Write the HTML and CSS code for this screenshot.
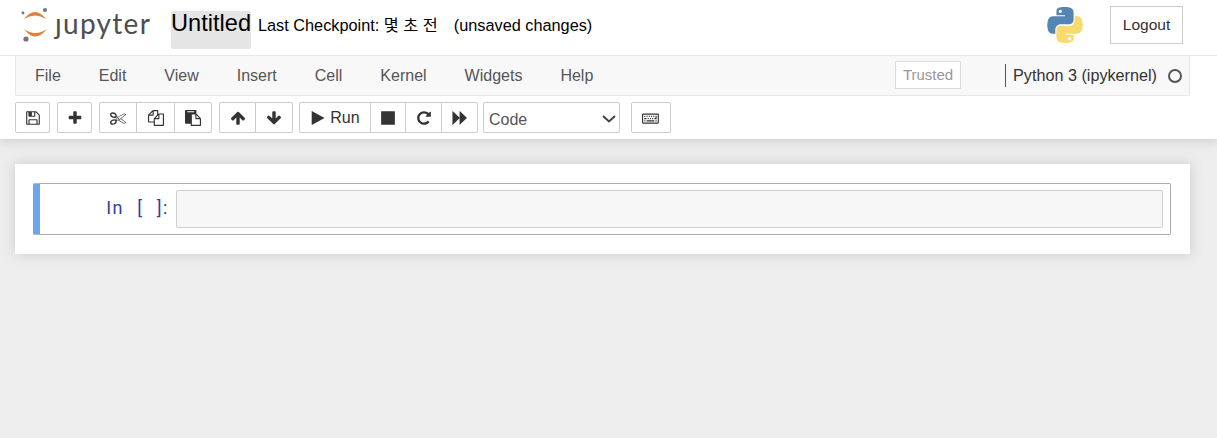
FILE: index.html
```html
<!DOCTYPE html>
<html lang="ko">
<head>
<meta charset="utf-8">
<title>Untitled - Jupyter Notebook</title>
<link rel="stylesheet" href="styles.css">
</head>
<body>
<div class="top">
  <header class="header">
    <div class="logo">
      <svg class="logo-mark" viewBox="0 0 36 40" width="36" height="40"><path class="arc" d="M3 14Q14 0 25 14Q14 7 3 14Z"/><path class="arc" d="M3 24Q14 39 26 24Q14 32 3 24Z"/><circle class="dot" cx="24" cy="5" r="2.1"/><circle class="dot" cx="2" cy="8" r="1.4"/><circle class="dot" cx="5" cy="34" r="2.6"/></svg>
      <span class="wordmark">ȷupyter</span>
    </div>
    <span class="title">Untitled</span>
    <span class="checkpoint">Last Checkpoint: 몇 초 전</span>
    <span class="autosave">(unsaved changes)</span>
    <svg class="pylogo" viewBox="0 0 110 110" width="36" height="36"><path class="py-blue" d="M54.9 0c-4.6 0-9 .4-12.8 1.1C30.8 3 28.8 7.2 28.8 14.9v10.2h26.2v3.400H19c-7.600 0-14.300 4.600-16.400 13.300-2.400 10-2.500 16.200 0 26.600 1.900 7.500 6.300 13 13.900 13h9V69c0-8.700 7.500-16.300 16.400-16.300h26.200c7.300 0 13.100-6 13.100-13.300V14.900c0-7.100-6-12.400-13.100-13.600C63.500.4 59.400 0 54.900 0zM40.700 8.100c2.700 0 4.900 2.200 4.900 5 0 2.700-2.200 4.900-4.900 4.900-2.700 0-4.900-2.200-4.900-4.900 0-2.800 2.200-5 4.900-5z"/><path class="py-yellow" d="M55.100 110c4.600 0 9-.4 12.800-1.100 11.300-1.900 13.300-6.100 13.300-13.800V84.900H55v-3.400h36c7.600 0 14.300-4.600 16.400-13.300 2.400-10 2.500-16.200 0-26.600-1.900-7.500-6.300-13-13.900-13h-9V41c0 8.700-7.500 16.300-16.400 16.300H41.900c-7.300 0-13.100 6-13.100 13.300v24.500c0 7.100 6 12.400 13.100 13.600 4.600.9 8.700 1.300 13.200 1.300zM69.300 101.900c-2.700 0-4.900-2.200-4.900-5 0-2.700 2.200-4.900 4.900-4.900 2.700 0 4.900 2.200 4.900 4.900 0 2.800-2.200 5-4.900 5z"/></svg>
    <button class="logout">Logout</button>
  </header>
  <nav class="menubar">
    <span class="menu-item">File</span>
    <span class="menu-item">Edit</span>
    <span class="menu-item">View</span>
    <span class="menu-item">Insert</span>
    <span class="menu-item">Cell</span>
    <span class="menu-item">Kernel</span>
    <span class="menu-item">Widgets</span>
    <span class="menu-item">Help</span>
    <span class="trusted">Trusted</span>
    <span class="kernel">Python 3 (ipykernel)</span>
    <span class="ring"></span>
  </nav>
  <div class="toolbar">
    <div class="group"><button class="btn w35"><svg class="ic" viewBox="0 0 1792 1792"><path d="M512 1536h768v-384h-768v384zm896 0h128v-896q0-14-10-38.500t-20-34.500l-281-281q-10-10-34-20t-39-10v416q0 40-28 68t-68 28h-576q-40 0-68-28t-28-68v-416h-128v1280h128v-416q0-40 28-68t68-28h832q40 0 68 28t28 68v416zm-384-928v-320q0-13-9.500-22.500t-22.500-9.500h-192q-13 0-22.500 9.500t-9.500 22.500v320q0 13 9.500 22.500t22.500 9.500h192q13 0 22.500-9.500t9.500-22.500zm640 32v928q0 40-28 68t-68 28h-1344q-40 0-68-28t-28-68v-1344q0-40 28-68t68-28h928q40 0 88 20t76 48l280 280q28 28 48 76t20 88z"/></svg></button></div>
    <div class="group"><button class="btn w35"><svg class="ic" viewBox="0 0 1792 1792"><path d="M1600 736v192q0 40-28 68t-68 28h-416v416q0 40-28 68t-68 28h-192q-40 0-68-28t-28-68v-416h-416q-40 0-68-28t-28-68v-192q0-40 28-68t68-28h416v-416q0-40 28-68t68-28h192q40 0 68 28t28 68v416h416q40 0 68 28t28 68z"/></svg></button></div>
    <div class="group">
      <button class="btn w38"><svg class="ic" viewBox="0 0 1792 1792"><path d="M960 896q26 0 45 19t19 45-19 45-45 19-45-19-19-45 19-45 45-19zm300 64l507 398q28 20 25 56-5 35-35 51l-128 64q-13 7-29 7-17 0-31-8l-690-387-110 66q-8 4-12 5 14 49 10 97-7 77-56 147.500t-132 123.500q-132 84-277 84-136 0-222-78-90-84-79-207 7-76 56-147t131-124q132-84 278-84 83 0 151 31 9-13 22-22l122-73-122-73q-13-9-22-22-68 31-151 31-146 0-278-84-82-53-131-124t-56-147q-5-59 15.500-113t63.500-93q85-79 222-79 145 0 277 84 83 52 132 123t56 148q4 48-10 97 4 1 12 5l110 66 690-387q14-8 31-8 16 0 29 7l128 64q30 16 35 51 3 36-25 56zm-681-260q46-42 21-108t-106-117q-92-59-192-59-74 0-113 36-46 42-21 108t106 117q92 59 192 59 74 0 113-36zm-85 745q81-51 106-117t-21-108q-39-36-113-36-100 0-192 59-81 51-106 117t21 108q39 36 113 36 100 0 192-59zm178-613l96 58v-11q0-36 33-56l14-8-79-47-26 26q-3 3-10 11t-12 12q-2 2-4 3.500t-3 2.500zm224 224l96 32 736-576-128-64-768 431v113l-160 96 9 8q2 2 7 6 4 4 11 12t11 12l26 26zm704 416l128-64-520-408-177 138q-2 3-13 7z"/></svg></button>
      <button class="btn w39"><svg class="ic" viewBox="0 0 1792 1792"><path d="M1696 384q40 0 68 28t28 68v1216q0 40-28 68t-68 28h-960q-40 0-68-28t-28-68v-288h-544q-40 0-68-28t-28-68v-672q0-40 20-88t48-76l408-408q28-28 76-48t88-20h416q40 0 68 28t28 68v328q68-40 128-40h416zm-544 213l-299 299h299v-299zm-640-384l-299 299h299v-299zm196 647l316-316v-416h-384v416q0 40-28 68t-68 28h-416v640h512v-256q0-40 20-88t48-76zm956 804v-1152h-384v416q0 40-28 68t-68 28h-416v640h896z"/></svg></button>
      <button class="btn w38"><svg class="ic" viewBox="0 0 1792 1792"><path d="M768 1664h896v-640h-416q-40 0-68-28t-28-68v-416h-384v1152zm256-1440v-64q0-13-9.500-22.500t-22.500-9.500h-704q-13 0-22.500 9.500t-9.500 22.500v64q0 13 9.500 22.500t22.500 9.500h704q13 0 22.500-9.500t9.500-22.500zm256 672h299l-299-299v299zm512 128v672q0 40-28 68t-68 28h-960q-40 0-68-28t-28-68v-160h-544q-40 0-68-28t-28-68v-1344q0-40 28-68t68-28h1088q40 0 68 28t28 68v328q21 13 36 28l408 408q28 28 48 76t20 88z"/></svg></button>
    </div>
    <div class="group tight">
      <button class="btn w37"><svg class="ic" viewBox="0 0 1792 1792"><path d="M1675 971q0 51-37 90l-75 75q-38 38-91 38-54 0-90-38l-294-293v704q0 52-37.500 84.500t-90.500 32.500h-128q-53 0-90.500-32.500t-37.500-84.500v-704l-294 293q-36 38-90 38t-90-38l-75-75q-38-38-38-90 0-53 38-91l651-651q35-37 90-37 54 0 91 37l651 651q37 39 37 91z"/></svg></button>
      <button class="btn w38"><svg class="ic" viewBox="0 0 1792 1792"><path d="M1675 832q0 53-37 90l-651 652q-39 37-91 37-53 0-90-37l-651-652q-38-36-38-90 0-53 38-91l74-75q39-37 91-37 53 0 90 37l294 294v-704q0-52 38-90t90-38h128q52 0 90 38t38 90v704l294-294q37-37 90-37 52 0 91 37l75 75q37 39 37 91z"/></svg></button>
    </div>
    <div class="group">
      <button class="btn w72"><svg class="ic" viewBox="0 0 1792 1792"><path d="M1576 927l-1328 738q-23 13-39.500 3t-16.500-36v-1472q0-26 16.500-36t39.500 3l1328 738q23 13 23 31t-23 31z"/></svg><span class="run">Run</span></button>
      <button class="btn w36"><svg class="ic" viewBox="0 0 1792 1792"><path d="M1664 192v1408q0 26-19 45t-45 19h-1408q-26 0-45-19t-19-45v-1408q0-26 19-45t45-19h1408q26 0 45 19t19 45z"/></svg></button>
      <button class="btn w37"><svg class="ic" viewBox="0 0 1792 1792"><path d="M1664 256v448q0 26-19 45t-45 19h-448q-42 0-59-40-17-39 14-69l138-138q-148-137-349-137-104 0-198.500 40.500t-163.500 109.500-109.500 163.500-40.500 198.500 40.500 198.500 109.500 163.500 163.500 109.500 198.500 40.500q119 0 225-52t179-147q7-10 23-12 15 0 25 9l137 138q9 8 9.500 20.500t-7.500 22.500q-109 132-264 204.500t-327 72.500q-156 0-298-61t-245-164-164-245-61-298 61-298 164-245 245-164 298-61q147 0 284.500 55.500t244.500 156.500l130-129q29-31 70-14 39 17 39 59z"/></svg></button>
      <button class="btn w37"><svg class="ic" viewBox="0 0 1792 1792"><path d="M96 1660q-19 13-32 6t-13-32v-1476q0-26 13-32t32 6l740 720q9 9 13 19v-713q0-26 13-32t32 6l740 720q19 19 19 32t-19 32l-740 720q-19 13-32 6t-13-32v-713q-4 10-13 19z"/></svg></button>
    </div>
    <select class="celltype"><option>Code</option></select>
    <button class="btn kbd"><svg class="ic-wide" viewBox="0 0 2048 1792"><path d="M384 1168v96q0 16-16 16h-96q-16 0-16-16v-96q0-16 16-16h96q16 0 16 16zm128-256v96q0 16-16 16h-224q-16 0-16-16v-96q0-16 16-16h224q16 0 16 16zm-128-256v96q0 16-16 16h-96q-16 0-16-16v-96q0-16 16-16h96q16 0 16 16zm1024 512v96q0 16-16 16h-864q-16 0-16-16v-96q0-16 16-16h864q16 0 16 16zm-640-256v96q0 16-16 16h-96q-16 0-16-16v-96q0-16 16-16h96q16 0 16 16zm-128-256v96q0 16-16 16h-96q-16 0-16-16v-96q0-16 16-16h96q16 0 16 16zm384 256v96q0 16-16 16h-96q-16 0-16-16v-96q0-16 16-16h96q16 0 16 16zm-128-256v96q0 16-16 16h-96q-16 0-16-16v-96q0-16 16-16h96q16 0 16 16zm384 256v96q0 16-16 16h-96q-16 0-16-16v-96q0-16 16-16h96q16 0 16 16zm384 256v96q0 16-16 16h-96q-16 0-16-16v-96q0-16 16-16h96q16 0 16 16zm-512-512v96q0 16-16 16h-96q-16 0-16-16v-96q0-16 16-16h96q16 0 16 16zm256 0v96q0 16-16 16h-96q-16 0-16-16v-96q0-16 16-16h96q16 0 16 16zm256 0v352q0 16-16 16h-224q-16 0-16-16v-96q0-16 16-16h112v-240q0-16 16-16h96q16 0 16 16zm128 752v-896h-1664v896h1664zm128-896v896q0 53-37.500 90.500t-90.500 37.500h-1664q-53 0-90.500-37.500t-37.500-90.500v-896q0-53 37.500-90.500t90.500-37.500h1664q53 0 90.500 37.500t37.500 90.500z"/></svg></button>
  </div>
</div>
<main class="site">
  <section class="notebook">
    <div class="cell">
      <div class="prompt">In [ ]:</div>
      <div class="input"></div>
    </div>
  </section>
</main>
</body>
</html>
```
FILE: styles.css
```css
* { box-sizing: border-box; }
html, body { margin: 0; height: 100%; overflow: hidden; }
body { display: flex; flex-direction: column; font-family: "Liberation Sans", Arial, sans-serif; font-size: 16px; color: #000; background: #eee; }

.top { background: #fff; height: 139px; box-shadow: 0 0 12px 1px rgba(87,87,87,.25); position: relative; flex: none; }

.header { height: 56px; display: flex; align-items: flex-start; border-bottom: 1px solid #e7e7e7; padding-left: 21px; }
.logo { display: flex; align-items: flex-start; width: 150px; flex: none; }
.logo-mark { margin-top: 5px; flex: none; }
.arc { fill: #e2803a; }
.dot { fill: #767677; }
.wordmark { font-family: "Lato", "Open Sans", sans-serif; font-size: 28px; line-height: 40px; letter-spacing: 1.3px; color: #4e4e4e; margin-left: -2px; margin-top: 3px; }
.title { background: #e5e5e5; border-radius: 2px; font-size: 23.6px; line-height: 24px; height: 38px; width: 80px; margin-top: 11px; color: #000; white-space: nowrap; }
.checkpoint { margin-left: 7px; margin-top: 16px; line-height: 18px; font-size: 16.3px; font-family: "Liberation Sans", "Noto Sans CJK KR", sans-serif; }
.autosave { margin-left: 16px; margin-top: 16px; line-height: 18px; font-size: 16.3px; }
.pylogo { margin-left: auto; margin-top: 7px; flex: none; }
.py-blue { fill: #5585b2; }
.py-yellow { fill: #f8da6e; }
.logout { width: 73px; height: 38px; margin: 6px 34px 0 27px; background: #fff; border: 1px solid #ccc; border-radius: 0; font: 15.5px "Liberation Sans", Arial, sans-serif; color: #333; padding: 0; }

.menubar { height: 40px; margin: 0 27px 0 15px; display: flex; align-items: center; background: #f8f8f8; border: 1px solid #e7e7e7; border-top: 0; border-radius: 0 0 2px 2px; color: #555; }
.menu-item { padding: 0 19px; line-height: 20px; }
.trusted { margin-left: auto; height: 28px; width: 66px; border: 1px solid #ddd; background: #fff; color: #999; font-size: 15px; line-height: 26px; text-align: center; margin-top: -2px; }
.kernel { margin-left: 44px; border-left: 1px solid #555; height: 23px; line-height: 23px; padding-left: 7px; color: #333; margin-top: -1px; font-size: 16.2px; }
.ring { width: 14px; height: 14px; border: 2.5px solid #555; border-radius: 50%; margin: 0 7px 0 11px; flex: none; }

.toolbar { display: flex; align-items: flex-start; padding: 6px 0 0 15px; }
.group { display: flex; margin-right: 7px; }
.group.tight { margin-right: 6px; }
.group .btn { border-radius: 0; margin-left: -1px; }
.group .btn:first-child { margin-left: 0; border-radius: 2px 0 0 2px; }
.group .btn:last-child { border-radius: 0 2px 2px 0; }
.group .btn:only-child { border-radius: 2px; }
.btn { height: 31px; background: #fff; border: 1px solid #ccc; border-radius: 2px; padding: 0; display: flex; align-items: center; justify-content: center; color: #333; font: 16px "Liberation Sans", Arial, sans-serif; }
.w35 { width: 35px; }
.w36 { width: 36px; }
.w37 { width: 37px; }
.w38 { width: 38px; }
.w39 { width: 39px; }
.w72 { width: 72px; }
.ic { width: 16px; height: 16px; fill: #333; display: block; }
.ic-wide { width: 18px; height: 16px; fill: #333; display: block; }
.run { margin-left: 4px; }
.celltype { appearance: none; width: 137px; height: 31px; margin-left: -2px; background: #fff url("data:image/svg+xml,%3Csvg xmlns='http://www.w3.org/2000/svg' width='14' height='8' viewBox='0 0 14 8'%3E%3Cpath d='M1 1l6 5.500 6-5.500' fill='none' stroke='%23444' stroke-width='2'/%3E%3C/svg%3E") no-repeat 118px 12px; border: 1px solid #ccc; border-radius: 2px; color: #555; font: 16px "Liberation Sans", Arial, sans-serif; padding: 3px 0 0 5px; }
.kbd { width: 40px; margin-left: 11px; }

.site { flex: 1; padding: 25px 27px 0 15px; background: #eee; }
.notebook { background: #fff; height: 90px; padding: 19px 19px 0 18px; box-shadow: 0 0 12px 1px rgba(87,87,87,.2); }
.cell { height: 52px; display: flex; align-items: flex-start; border: 1px solid #ababab; border-left: 7px solid #6ea6ee; border-radius: 2px; padding: 6px 7px 0 0; }
.prompt { width: 136px; flex: none; padding: 7px 7px 0 0; text-align: right; color: #303f9f; font-family: "Roboto", "Liberation Sans", sans-serif; font-weight: 400; font-size: 18px; letter-spacing: 1.6px; word-spacing: 7px; line-height: 22px; white-space: pre; }
.input { flex: 1; height: 38px; background: #f7f7f7; border: 1px solid #cfcfcf; border-radius: 2px; }
```
